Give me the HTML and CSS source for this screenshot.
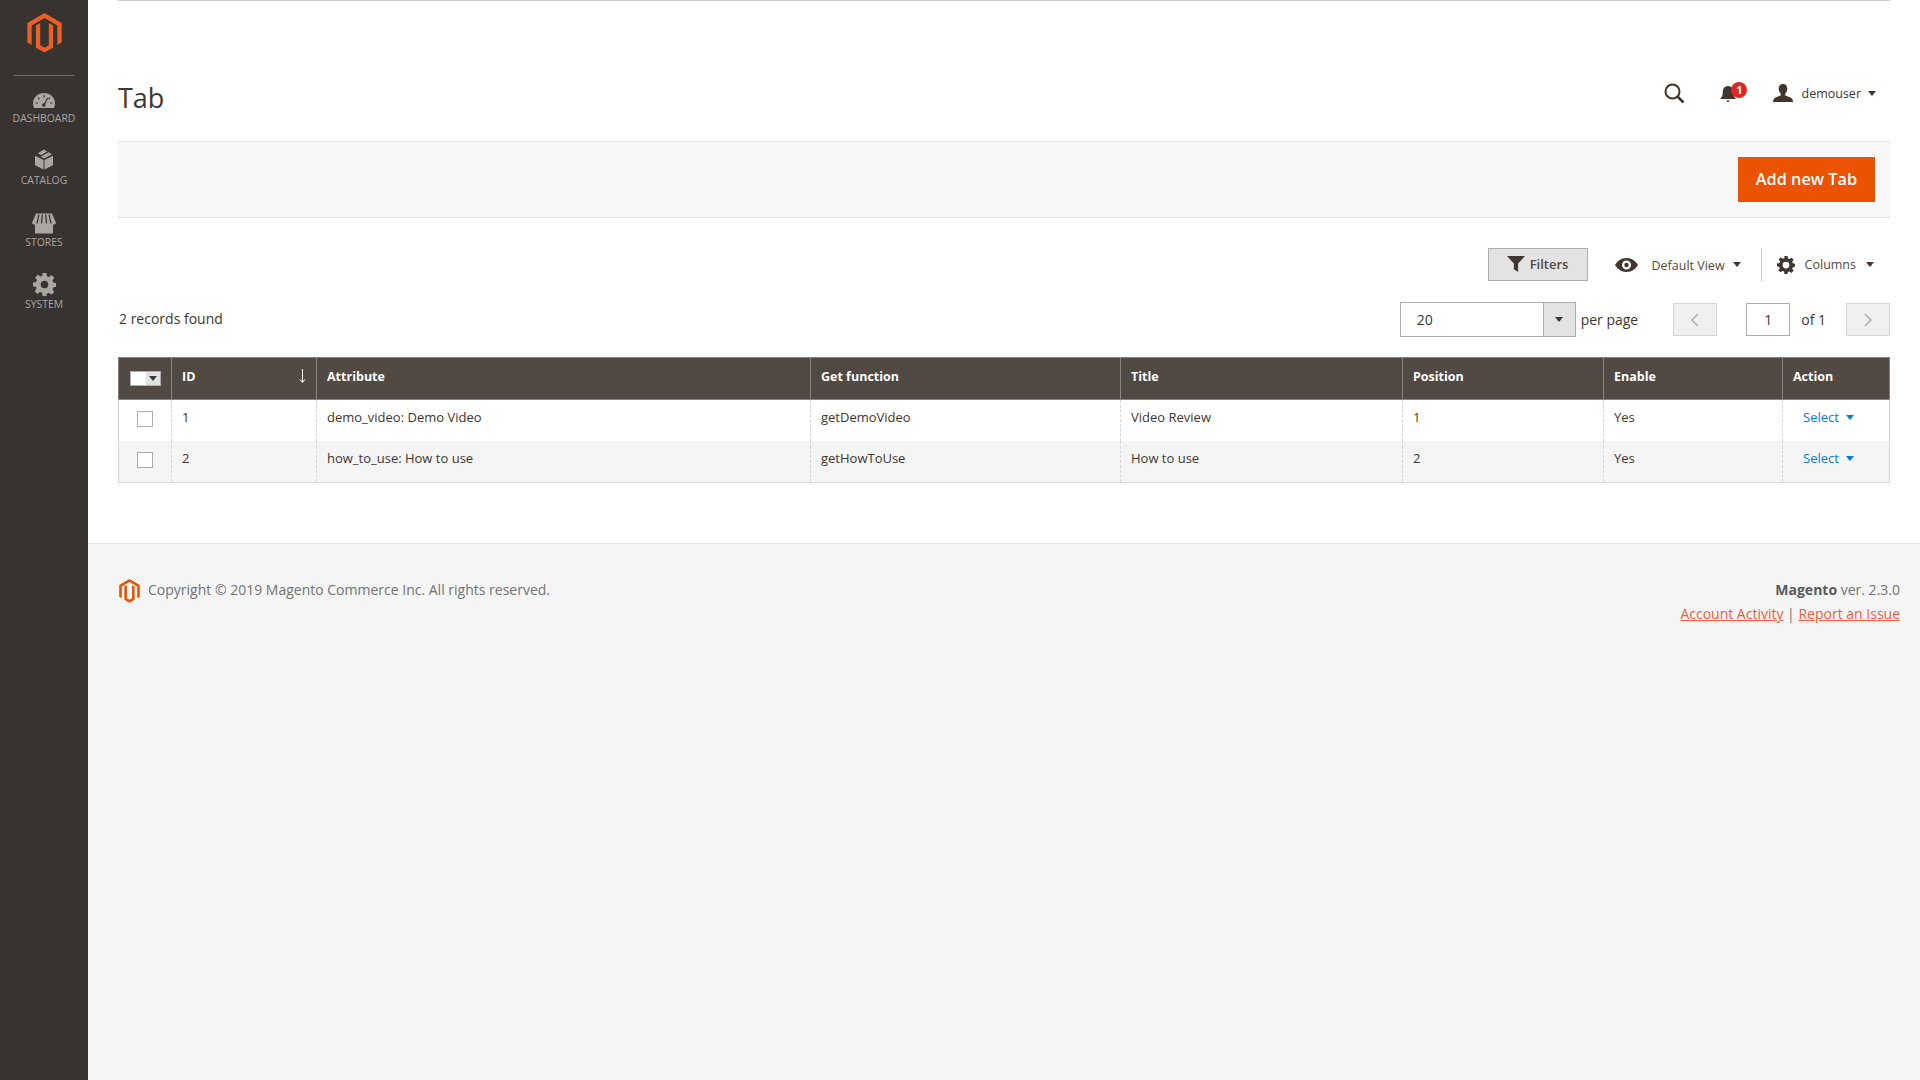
FILE: index.html
```html
<!DOCTYPE html>
<html lang="en">
<head>
  <meta charset="UTF-8">
  <title>Tab / Magento Admin</title>
  <link rel="stylesheet" href="styles.css">
</head>
<body>
  <aside class="sidebar">
    <svg class="logo" viewBox="0 0 36 42"><path fill="#eb5f24" d="M18 0 36 10.400V31l-4.500 2.600V13L18 5.200 4.500 13v20.600L0 31V10.400zM9 13l4.500-2.600v23.500l4.500 2.600 4.500-2.600V10.400L27 13v23.400l-9 5.200-9-5.200z"/></svg>
    <nav class="menu">
      <a class="menu-item">
        <svg width="22" height="23" viewBox="0 -6 22 23"><path fill="#aaa6a0" d="M11 0C4.900 0 0 4.600 0 10.500c0 1.600.4 3.100 1 4.500h20c.6-1.400 1-2.900 1-4.500C22 4.600 17.100 0 11 0z"/><path stroke="#373330" stroke-width="1.200" stroke-linecap="round" fill="none" d="M3 10h1.500M5.300 4.800l1 1M11 2.500V4M16.700 4.800l-1 1M17.500 10H19M14.500 5.500l-3 5.500"/><circle cx="10.800" cy="12" r="1.800" fill="#373330"/></svg>
        <span>Dashboard</span>
      </a>
      <a class="menu-item">
        <svg width="18" height="23" viewBox="0 1 19 21"><path fill="#aaa6a0" d="M0 6.500 9 11v10l-9-4.500zM19 6.500 10 11v10l9-4.500z"/><path fill="#aaa6a0" d="M9.500 0 13 2 6.500 5.600 3 3.800zM14.500 2.800 18 4.800 9.500 9.500 6 7.500 12.500 3.800z"/></svg>
        <span>Catalog</span>
      </a>
      <a class="menu-item">
        <svg width="24" height="23" viewBox="0 -1 24 20"><path fill="#aaa6a0" d="M3 10h18v10H3z"/><path fill="#aaa6a0" d="M4 0h16l4 9.500c-.5 1-1.500 1.500-2.300 1.500H2.300C1.500 11 .5 10.500 0 9.500z"/><path stroke="#373330" stroke-width="1.200" fill="none" d="M7 1 5 10M10.300 1 9.500 10M13.700 1l.8 9M17 1l2 9"/></svg>
        <span>Stores</span>
      </a>
      <a class="menu-item">
        <svg width="23" height="23" viewBox="0 0 24 24"><path fill="#aaa6a0" fill-rule="evenodd" d="M10 0h4l.6 3.300 2 .8L19.400 2.200l2.800 2.800-1.900 2.800.8 2 3.300.6v4l-3.300.6-.8 2 1.900 2.800-2.800 2.800-2.800-1.900-2 .8L14 24h-4l-.6-3.300-2-.8-2.800 1.900-2.800-2.800 1.900-2.800-.8-2L0 14v-4l3.300-.6.800-2-1.900-2.800L5 1.800l2.800 1.900 2-.8zM12 8a4 4 0 1 0 0 8 4 4 0 0 0 0-8z"/></svg>
        <span>System</span>
      </a>
    </nav>
  </aside>

  <div class="page">
    <main class="content">
      <header class="page-header">
        <h1>Tab</h1>
        <div class="header-actions">
          <svg class="search-icon" width="21" height="21" viewBox="0 0 21 21"><circle cx="8.500" cy="8.500" r="7" fill="none" stroke="#41362f" stroke-width="2"/><path d="m13.500 13.500 6 6" stroke="#41362f" stroke-width="2.600" fill="none"/></svg>
          <div class="bell">
            <svg width="16" height="20" viewBox="0 0 16 20"><path fill="#41362f" d="M8 1c3.500 0 5.200 2.800 5.200 6 0 3.500 1 5.500 2.800 7H0c1.800-1.500 2.800-3.500 2.800-7C2.800 3.800 4.500 1 8 1zM6.500 15.500h3a1.500 1.500 0 0 1-3 0z"/></svg>
            <span class="badge">1</span>
          </div>
          <div class="user">
            <svg width="20" height="18" viewBox="0 0 20 18"><path fill="#41362f" d="M10 0c2.800 0 4.300 2 4.300 4.700 0 2-.9 3.900-2.100 5v1.300c0 1 4.300 1.500 6.600 3.500.8.700 1.200 2 1.200 3.500H0c0-1.500.4-2.800 1.200-3.500 2.300-2 6.600-2.500 6.600-3.500V9.700C6.600 8.600 5.700 6.700 5.700 4.700 5.700 2 7.200 0 10 0z"/></svg>
            <span>demouser</span>
            <i class="caret"></i>
          </div>
        </div>
      </header>

      <div class="action-bar">
        <button class="btn-primary">Add new Tab</button>
      </div>

      <div class="toolbar">
        <button class="btn-filters">
          <svg width="18" height="16" viewBox="0 0 17 15"><path fill="#41362f" d="M0 0h17l-6.500 7v8l-4-2.500V7z"/></svg>
          Filters
        </button>
        <div class="view-switch">
          <svg width="23" height="14" viewBox="0 0 23 14"><path fill="#41362f" fill-rule="evenodd" d="M11.500 0C17 0 21 3.500 23 7c-2 3.500-6 7-11.500 7S2 10.500 0 7C2 3.500 6 0 11.500 0zm0 2.500a4.500 4.500 0 1 0 0 9 4.500 4.500 0 0 0 0-9zm0 2.300a2.200 2.200 0 1 1 0 4.400 2.200 2.200 0 0 1 0-4.400z"/></svg>
          <span>Default View</span>
          <i class="caret"></i>
        </div>
        <div class="columns-switch">
          <svg width="18" height="18" viewBox="0 0 24 24"><path fill="#41362f" fill-rule="evenodd" d="M10 0h4l.6 3.300 2 .8L19.400 2.200l2.800 2.800-1.900 2.800.8 2 3.300.6v4l-3.300.6-.8 2 1.900 2.800-2.800 2.800-2.800-1.900-2 .8L14 24h-4l-.6-3.300-2-.8-2.800 1.900-2.800-2.800 1.900-2.800-.8-2L0 14v-4l3.300-.6.800-2-1.900-2.800L5 1.800l2.800 1.900 2-.8zM12 7.500a4.500 4.500 0 1 0 0 9 4.500 4.500 0 0 0 0-9z"/></svg>
          <span>Columns</span>
          <i class="caret"></i>
        </div>
      </div>

      <div class="pager-row">
        <div class="records">2 records found</div>
        <div class="pager">
          <div class="per-page">
            <span class="per-value">20</span>
            <span class="per-toggle"><i class="caret"></i></span>
          </div>
          <span class="per-label">per page</span>
          <button class="page-btn">
            <svg width="8" height="14" viewBox="0 0 8 14"><path d="M7 1 1 7l6 6" fill="none" stroke="#a5a5a5" stroke-width="1.300"/></svg>
          </button>
          <span class="page-input">1</span>
          <span class="page-of">of 1</span>
          <button class="page-btn">
            <svg width="8" height="14" viewBox="0 0 8 14"><path d="m1 1 6 6-6 6" fill="none" stroke="#a5a5a5" stroke-width="1.300"/></svg>
          </button>
        </div>
      </div>

      <table class="grid">
        <colgroup>
          <col class="col-check">
          <col class="col-id">
          <col class="col-attr">
          <col class="col-func">
          <col class="col-title">
          <col class="col-pos">
          <col class="col-enable">
          <col class="col-action">
        </colgroup>
        <thead>
          <tr>
            <th class="check-head"><span class="mass-check"><span class="mass-box"></span><span class="mass-toggle"><i class="caret"></i></span></span></th>
            <th class="sorted">ID<svg class="sort-arrow" width="7" height="14" viewBox="0 0 7 14"><path d="M3.500 0v13M1 10.500l2.500 3 2.500-3" fill="none" stroke="#fff" stroke-width="1"/></svg></th>
            <th>Attribute</th>
            <th>Get function</th>
            <th>Title</th>
            <th>Position</th>
            <th>Enable</th>
            <th>Action</th>
          </tr>
        </thead>
        <tbody>
          <tr>
            <td class="check-cell"><span class="checkbox"></span></td>
            <td>1</td>
            <td>demo_video: Demo Video</td>
            <td>getDemoVideo</td>
            <td>Video Review</td>
            <td>1</td>
            <td>Yes</td>
            <td class="action-cell"><a>Select</a><i class="caret caret-blue"></i></td>
          </tr>
          <tr class="even">
            <td class="check-cell"><span class="checkbox"></span></td>
            <td>2</td>
            <td>how_to_use: How to use</td>
            <td>getHowToUse</td>
            <td>How to use</td>
            <td>2</td>
            <td>Yes</td>
            <td class="action-cell"><a>Select</a><i class="caret caret-blue"></i></td>
          </tr>
        </tbody>
      </table>
    </main>

    <footer class="footer">
      <div class="copyright">
        <svg width="21" height="24" viewBox="0 0 36 42"><path fill="#eb5202" d="M18 0 36 10.400V31l-4.500 2.600V13L18 5.200 4.500 13v20.600L0 31V10.400zM9 13l4.500-2.600v23.500l4.500 2.600 4.500-2.600V10.400L27 13v23.400l-9 5.200-9-5.200z"/></svg>
        <span>Copyright © 2019 Magento Commerce Inc. All rights reserved.</span>
      </div>
      <div class="legal">
        <p><strong>Magento</strong> ver. 2.3.0</p>
        <p><a>Account Activity</a> | <a>Report an Issue</a></p>
      </div>
    </footer>
  </div>
</body>
</html>
```

FILE: styles.css
```css
*{margin:0;padding:0;box-sizing:border-box;}
html,body{height:100%;}
body{display:flex;font-family:"Open Sans",sans-serif;color:#41362f;background:#fff;font-size:14px;overflow:hidden;}

.sidebar{width:88px;flex:none;background:#373330;display:flex;flex-direction:column;align-items:center;}
.logo{width:35px;height:40px;margin-top:13px;flex:none;}
.menu{width:60px;margin-top:22px;border-top:1px solid #736e69;padding-top:11px;display:flex;flex-direction:column;}
.menu-item{height:62px;display:flex;flex-direction:column;align-items:center;justify-content:flex-start;color:#aaa6a0;}
.menu-item svg{height:23px;flex:none;}
.menu-item span{font-size:10.400px;line-height:14px;text-transform:uppercase;margin-top:1px;}

.page{flex:1;display:flex;flex-direction:column;min-width:0;}
.content{padding:0 30px;}

.page-header{height:141px;border-top:1px solid #ccc;display:flex;justify-content:space-between;align-items:flex-start;padding-top:77px;}
.page-header h1{font-size:27px;font-weight:400;line-height:40px;}
.header-actions{display:flex;align-items:center;height:30px;}
.search-icon{margin-right:35px;margin-top:1px;}
.bell{position:relative;width:16px;height:20px;margin-right:37px;margin-top:3px;}
.badge{position:absolute;left:11px;top:-3px;width:16px;height:16px;border-radius:50%;background:#e22626;color:#fff;font-size:11px;font-weight:700;line-height:16px;text-align:center;}
.user{display:flex;align-items:center;font-size:12.500px;padding-right:14px;}
.user span{margin:0 7px 0 8px;}
.caret{display:inline-block;width:0;height:0;border-left:4.500px solid transparent;border-right:4.500px solid transparent;border-top:5px solid #41362f;}

.action-bar{height:77px;background:#f8f8f8;border-top:1px solid #e3e3e3;border-bottom:1px solid #e3e3e3;display:flex;justify-content:flex-end;align-items:flex-start;padding:15px 15px 0 0;}
.btn-primary{width:137px;height:45px;border:none;background:#eb5202;color:#fff;font:600 16.300px "Open Sans",sans-serif;padding-bottom:2px;}

.toolbar{display:flex;justify-content:flex-end;align-items:center;margin-top:30px;padding-right:16px;height:33px;}
.btn-filters{width:100px;height:33px;background:#e3e3e3;border:1px solid #adadad;font:600 13px "Open Sans",sans-serif;color:#514943;display:flex;align-items:center;justify-content:center;gap:5px;padding-bottom:2px;}
.view-switch{display:flex;align-items:center;font-size:12.500px;margin-left:27px;padding-right:20px;height:33px;color:#514943;}
.view-switch span{margin:2px 8px 0 14px;}
.columns-switch{display:flex;align-items:center;font-size:12.500px;border-left:1px solid #ccc;padding-left:15px;height:33px;color:#514943;}
.columns-switch span{margin:0 10px 0 10px;}

.pager-row{display:flex;justify-content:space-between;align-items:center;margin-top:21px;height:35px;}
.records{font-size:14px;margin:-2px 0 0 1px;}
.pager{display:flex;align-items:center;padding-right:0;}
.per-page{display:flex;width:176px;height:35px;border:1px solid #adadad;}
.per-value{flex:1;padding-left:16px;line-height:33px;font-size:14px;}
.per-toggle{width:32px;background:#e3e3e3;border-left:1px solid #adadad;display:flex;align-items:center;justify-content:center;}
.per-label{margin:0 35px 0 5px;font-size:14px;}
.page-btn{width:44px;height:33px;background:#f0f0f0;border:1px solid #d6d6d6;display:flex;align-items:center;justify-content:center;}
.page-input{width:44px;height:33px;margin-left:29px;border:1px solid #adadad;text-align:center;line-height:31px;font-size:14px;}
.page-of{margin:0 20px 0 11px;font-size:14px;}

.grid{width:calc(100% - 1px);margin-top:20px;border-collapse:collapse;table-layout:fixed;font-size:13px;}
.col-check{width:53px;}
.col-id{width:145px;}
.col-attr{width:494px;}
.col-func{width:310px;}
.col-title{width:282px;}
.col-pos{width:201px;}
.col-enable{width:179px;}
.col-action{width:107px;}
.grid th{height:42px;background:#514943;color:#fff;font-size:12.500px;font-weight:700;text-align:left;padding:0 10px 5px;border:1px solid #8a837f;}
.grid td{height:41px;padding:0 10px 6px;border-left:1px dashed #d6d6d6;border-right:1px dashed #d6d6d6;}
.grid tbody tr:last-child td{height:42px;padding-bottom:7px;border-bottom:1px solid #d6d6d6;}
.grid td:first-child{border-left:1px solid #d6d6d6;}
.grid td:last-child{border-right:1px solid #d6d6d6;}
.even td{background:#f5f5f5;}
.check-head{text-align:center !important;padding:0 0 4px !important;}
.check-cell{text-align:center !important;padding:0 0 6px !important;}
.sorted{position:relative;}
.sort-arrow{position:absolute;right:10px;top:11px;}
.mass-check{display:inline-flex;vertical-align:middle;width:31px;height:15px;margin-top:3px;border:1px solid #adadad;}
.mass-box{width:15px;background:#fff;}
.mass-toggle{flex:1;background:#e3e3e3;display:flex;align-items:center;justify-content:center;}
.mass-toggle .caret{border-left-width:4px;border-right-width:4px;}
.checkbox{display:inline-block;vertical-align:middle;width:16px;height:16px;background:#fff;border:1px solid #adadad;}
.action-cell{padding-left:20px !important;color:#007bdb;}
.caret-blue{border-top-color:#007bdb;margin-left:7px;vertical-align:2px;}

.footer{flex:1;background:#f5f5f5;border-top:1px solid #e3e3e3;margin-top:60px;display:flex;justify-content:space-between;padding:36px 20px 0 31px;color:#737373;font-size:14px;}
.copyright{display:flex;align-items:flex-start;gap:8px;}
.copyright svg{margin-top:-1px;}
.legal{text-align:right;line-height:24px;margin-top:-2px;}
.legal strong{font-weight:700;color:#5a5a5a;}
.legal a{color:#eb5f3a;text-decoration:underline;}
```
